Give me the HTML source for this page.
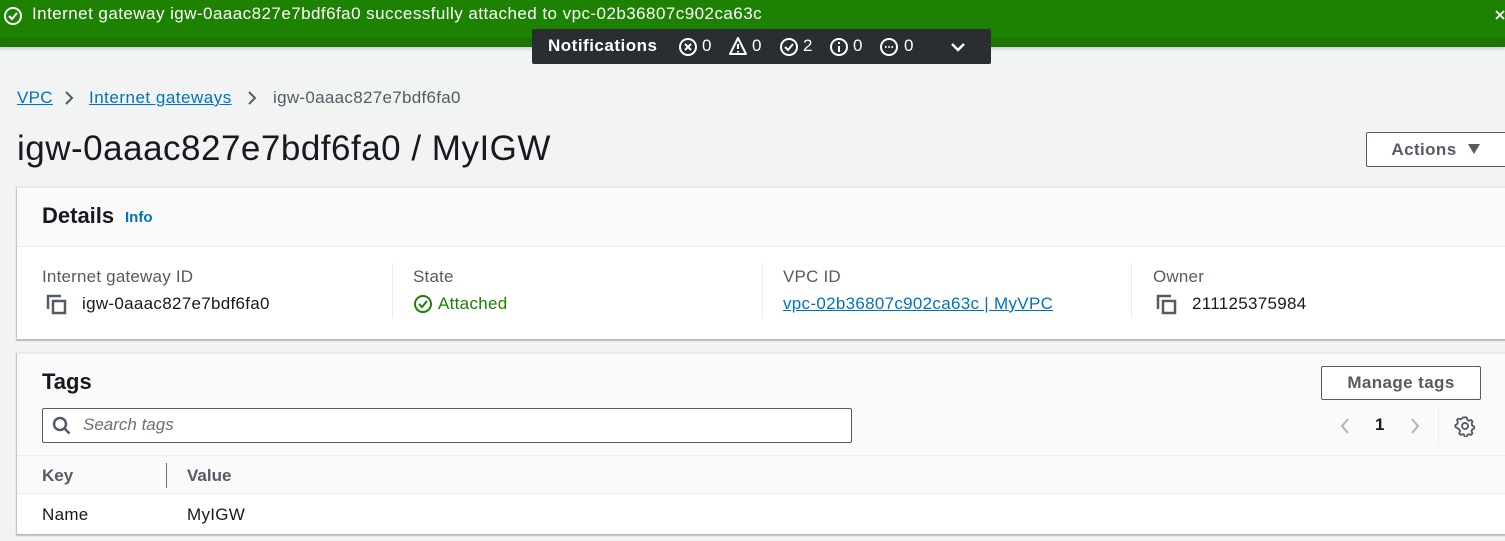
<!DOCTYPE html>
<html><head><meta charset="utf-8"><style>
*{box-sizing:border-box;margin:0;padding:0}
body{width:1505px;height:541px;overflow:hidden;background:#f2f3f3;font-family:"Liberation Sans",sans-serif;color:#16191f;position:relative}
.a{position:absolute;white-space:nowrap}
.lnk{color:#0073bb;text-decoration:underline}
.lab{color:#545b64;font-size:17px;letter-spacing:.2px}
.val{font-size:17px;letter-spacing:.3px}
.btn{position:absolute;border:1px solid #545b64;background:#fff;border-radius:2px;font-weight:bold;color:#545b64;font-size:17px;text-align:center;letter-spacing:.4px}
svg{position:absolute}
</style></head><body>
<div class="a" style="left:0;top:0;width:1505px;height:38px;background:#1d8102"></div>
<div class="a" style="left:0;top:38px;width:1505px;height:9px;background:#1a7600;box-shadow:0 2px 3px rgba(0,0,0,.15)"></div>
<svg style="left:3px;top:6px" width="20" height="20" viewBox="0 0 20 20"><circle cx="10" cy="10" r="8" fill="none" stroke="#fff" stroke-width="2"/><path d="M6 10l3 3 5-6" fill="none" stroke="#fff" stroke-width="2"/></svg>
<div class="a" style="left:32px;top:4px;color:#fff;font-size:17px;letter-spacing:.45px">Internet gateway igw-0aaac827e7bdf6fa0 successfully attached to vpc-02b36807c902ca63c</div>
<svg style="left:1494px;top:8px" width="11" height="14" viewBox="0 0 11 14"><path d="M2 3l8 8M10 3l-8 8" stroke="#fff" stroke-width="1.8"/></svg>
<div class="a" style="left:532px;top:29px;width:459px;height:35px;background:#2a2e33;border-radius:2px;color:#fff;font-size:17px">
<span class="a" style="left:16px;top:7px;font-weight:bold;letter-spacing:.5px">Notifications</span>
<svg style="left:146px;top:8px" width="20" height="20" viewBox="0 0 20 20"><circle cx="10" cy="10" r="8" fill="none" stroke="#fff" stroke-width="2"/><path d="M7 7l6 6M13 7l-6 6" stroke="#fff" stroke-width="2"/></svg><span class="a" style="left:170px;top:7px">0</span>
<svg style="left:196px;top:7px" width="20" height="20" viewBox="0 0 20 20"><path d="M10 2L18 18H2Z" fill="none" stroke="#fff" stroke-width="2" stroke-linejoin="round"/><path d="M10 8v5M10 15v1.5" stroke="#fff" stroke-width="2"/></svg><span class="a" style="left:220px;top:7px">0</span>
<svg style="left:247px;top:8px" width="20" height="20" viewBox="0 0 20 20"><circle cx="10" cy="10" r="8" fill="none" stroke="#fff" stroke-width="2"/><path d="M6 10l3 3 5-6" fill="none" stroke="#fff" stroke-width="2"/></svg><span class="a" style="left:271px;top:7px">2</span>
<svg style="left:297px;top:8px" width="20" height="20" viewBox="0 0 20 20"><circle cx="10" cy="10" r="8" fill="none" stroke="#fff" stroke-width="2"/><path d="M10 9v6M10 5v2" stroke="#fff" stroke-width="2"/></svg><span class="a" style="left:321px;top:7px">0</span>
<svg style="left:347px;top:8px" width="20" height="20" viewBox="0 0 20 20"><circle cx="10" cy="10" r="8" fill="none" stroke="#fff" stroke-width="2"/><path d="M6 10h1.5M9.3 10h1.5M12.5 10h1.5" stroke="#fff" stroke-width="2"/></svg><span class="a" style="left:372px;top:7px">0</span>
<svg style="left:417px;top:10px" width="18" height="16" viewBox="0 0 18 16"><path d="M3 5l6 6 6-6" fill="none" stroke="#fff" stroke-width="2.5"/></svg>
</div>
<div class="a" style="left:17px;top:88px;font-size:17px;letter-spacing:.3px"><span class="lnk">VPC</span></div>
<svg style="left:62px;top:90px" width="14" height="16" viewBox="0 0 14 16"><path d="M4 2l6 6-6 6" fill="none" stroke="#545b64" stroke-width="2"/></svg>
<div class="a" style="left:89px;top:88px;font-size:17px;letter-spacing:.5px"><span class="lnk">Internet gateways</span></div>
<svg style="left:245px;top:90px" width="14" height="16" viewBox="0 0 14 16"><path d="M4 2l6 6-6 6" fill="none" stroke="#545b64" stroke-width="2"/></svg>
<div class="a" style="left:273px;top:88px;font-size:17px;color:#545b64;letter-spacing:.3px">igw-0aaac827e7bdf6fa0</div>
<div class="a" style="left:17px;top:129px;font-size:35px;letter-spacing:.5px">igw-0aaac827e7bdf6fa0 / MyIGW</div>
<div class="btn" style="left:1366px;top:132px;width:150px;height:35px;line-height:33px;padding-right:34px">Actions</div>
<svg style="left:1467px;top:143px" width="14" height="12" viewBox="0 0 14 12"><path d="M1 1h12L7 11Z" fill="#545b64"/></svg>
<!-- details -->
<div class="a" style="left:17px;top:187px;width:1500px;height:152px;background:#fff;box-shadow:0 1px 1px 1px rgba(0,28,36,.25);border-top:1px solid #eaeded"></div>
<div class="a" style="left:17px;top:188px;width:1500px;height:59px;background:#fafafa;border-bottom:1px solid #eaeded"></div>
<div class="a" style="left:42px;top:203px;font-size:22px;font-weight:bold">Details</div>
<div class="a" style="left:125px;top:209px;font-size:15px;font-weight:bold;color:#0073bb">Info</div>
<div class="a" style="left:392px;top:263px;width:1px;height:55px;background:#eaeded"></div>
<div class="a" style="left:762px;top:263px;width:1px;height:55px;background:#eaeded"></div>
<div class="a" style="left:1131px;top:263px;width:1px;height:55px;background:#eaeded"></div>
<div class="a lab" style="left:42px;top:267px">Internet gateway ID</div>
<svg style="left:46px;top:294px" width="22" height="22" viewBox="0 0 22 22"><path d="M2 15V2h13" fill="none" stroke="#545b64" stroke-width="2.5"/><rect x="7" y="7" width="12" height="12" fill="none" stroke="#545b64" stroke-width="2.5"/></svg>
<div class="a val" style="left:82px;top:294px">igw-0aaac827e7bdf6fa0</div>
<div class="a lab" style="left:413px;top:267px">State</div>
<svg style="left:413px;top:294px" width="20" height="20" viewBox="0 0 20 20"><circle cx="10" cy="10" r="8" fill="none" stroke="#1d8102" stroke-width="2"/><path d="M6 10l3 3 5-6" fill="none" stroke="#1d8102" stroke-width="2"/></svg>
<div class="a val" style="left:438px;top:294px;color:#1d8102">Attached</div>
<div class="a lab" style="left:783px;top:267px">VPC ID</div>
<div class="a val" style="left:783px;top:294px"><span class="lnk">vpc-02b36807c902ca63c | MyVPC</span></div>
<div class="a lab" style="left:1153px;top:267px">Owner</div>
<svg style="left:1156px;top:294px" width="22" height="22" viewBox="0 0 22 22"><path d="M2 15V2h13" fill="none" stroke="#545b64" stroke-width="2.5"/><rect x="7" y="7" width="12" height="12" fill="none" stroke="#545b64" stroke-width="2.5"/></svg>
<div class="a val" style="left:1192px;top:294px">211125375984</div>
<!-- tags -->
<div class="a" style="left:17px;top:353px;width:1500px;height:181px;background:#fff;box-shadow:0 1px 1px 1px rgba(0,28,36,.25);border-top:1px solid #eaeded"></div>
<div class="a" style="left:17px;top:354px;width:1500px;height:140px;background:#fafafa;border-bottom:1px solid #eaeded"></div>
<div class="a" style="left:17px;top:455px;width:1500px;height:1px;background:#eaeded"></div>
<div class="a" style="left:42px;top:369px;font-size:22px;font-weight:bold">Tags</div>
<div class="btn" style="left:1321px;top:366px;width:160px;height:34px;line-height:32px">Manage tags</div>
<div class="a" style="left:42px;top:408px;width:810px;height:35px;background:#fff;border:1px solid #545b64;border-radius:2px"></div>
<svg style="left:52px;top:416px" width="20" height="20" viewBox="0 0 20 20"><circle cx="8" cy="8" r="6" fill="none" stroke="#545b64" stroke-width="2.5"/><path d="M12.5 12.5l5 5" stroke="#545b64" stroke-width="2.5"/></svg>
<div class="a" style="left:83px;top:415px;font-size:17px;font-style:italic;color:#687078">Search tags</div>
<svg style="left:1338px;top:416px" width="14" height="20" viewBox="0 0 14 20"><path d="M10 3L4 10l6 7" fill="none" stroke="#aab7b8" stroke-width="2"/></svg>
<div class="a" style="left:1375px;top:415px;font-size:17px;font-weight:bold">1</div>
<svg style="left:1408px;top:416px" width="14" height="20" viewBox="0 0 14 20"><path d="M4 3l6 7-6 7" fill="none" stroke="#aab7b8" stroke-width="2"/></svg>
<div class="a" style="left:1438px;top:408px;width:1px;height:35px;background:#eaeded"></div>
<svg style="left:1454px;top:415px" width="22" height="22" viewBox="0 0 24 24"><path d="M12 2.5l2 .3.6 2.5 1.7 1 2.4-.8 1.4 1.5.1.1-.9 2.4.5 1.9 2.2 1.3v2l-2.2 1.2-.6 1.9.9 2.4-1.5 1.5-2.4-.8-1.7 1-.6 2.5h-2.1l-.6-2.5-1.7-1-2.4.8-1.5-1.5.9-2.4-.6-1.9L1.5 13v-2l2.2-1.3.5-1.9-.9-2.4 1.5-1.5 2.4.8 1.700-1L9.5 2.8z" fill="none" stroke="#545b64" stroke-width="2" stroke-linejoin="round"/><circle cx="12" cy="12" r="3.3" fill="none" stroke="#545b64" stroke-width="2"/></svg>
<div class="a" style="left:42px;top:466px;font-size:17px;font-weight:bold;color:#545b64">Key</div>
<div class="a" style="left:166px;top:463px;width:1px;height:25px;background:#687078"></div>
<div class="a" style="left:187px;top:466px;font-size:17px;font-weight:bold;color:#545b64">Value</div>
<div class="a val" style="left:42px;top:505px">Name</div>
<div class="a val" style="left:187px;top:505px">MyIGW</div>
</body></html>
